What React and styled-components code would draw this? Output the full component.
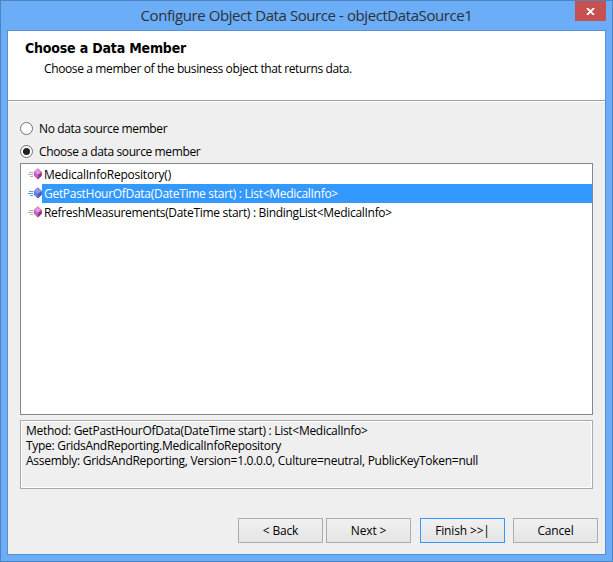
import React, { useState } from "react";
import styled, { createGlobalStyle } from "styled-components";

const members = [
  { name: "MedicalInfoRepository()", spacing: "-0.23px" },
  {
    name: "GetPastHourOfData(DateTime start) : List<MedicalInfo>",
    spacing: "-0.29px",
  },
  {
    name: "RefreshMeasurements(DateTime start) : BindingList<MedicalInfo>",
    spacing: "-0.31px",
  },
];

const MethodIcon = ({ selected }) => {
  const [light, mid, dark] = selected
    ? ["#8c9cf0", "#6b7ce0", "#4c5cba"]
    : ["#e49ade", "#c763bf", "#97388f"];
  return (
    <Icon width="14" height="12" viewBox="0 0 14 12">
      <path
        d="M1 4.5h4M0 6.5h5M2 8.5h3"
        stroke={selected ? "#5a9bd8" : "#b3b29a"}
        fill="none"
      />
      <path d="M9.8 0.3L13.8 4V7.8L9.8 11.6L5.8 7.8V4Z" fill={mid} />
      <path d="M9.8 0.9L12.8 4L9.8 6.8L6.8 4Z" fill={light} />
      <path d="M13.8 4.2V7.8L9.8 11.6V7.2Z" fill={dark} />
    </Icon>
  );
};

const App = () => {
  const [useMember, setUseMember] = useState(true);
  const [selected, setSelected] = useState(1);

  return (
    <>
      <GlobalStyle />
      <Window>
        <TitleBar>
          <Caption>Configure Object Data Source - objectDataSource1</Caption>
          <CloseButton type="button" aria-label="Close">
            <svg width="9" height="7" viewBox="0 0 9 7">
              <path d="M1 0L8 7M8 0L1 7" stroke="#fff" strokeWidth="1.8" />
            </svg>
          </CloseButton>
        </TitleBar>
        <Client>
          <Header>
            <Heading>Choose a Data Member</Heading>
            <Subheading>
              Choose a member of the business object that returns data.
            </Subheading>
          </Header>
          <Content>
            {/* member choice */}
            <Option onClick={() => setUseMember(false)}>
              <Radio checked={!useMember} />
              <Text $spacing="-0.38px">No data source member</Text>
            </Option>
            <Option onClick={() => setUseMember(true)}>
              <Radio checked={useMember} />
              <Text $spacing="-0.38px">Choose a data source member</Text>
            </Option>
            <List>
              {members.map((m, index) => (
                <Row key={m.name} onClick={() => setSelected(index)}>
                  <MethodIcon selected={index === selected} />
                  <RowLabel $selected={index === selected}>
                    <Text $spacing={m.spacing}>{m.name}</Text>
                  </RowLabel>
                </Row>
              ))}
            </List>
            {/* member details */}
            <Info>
              <Text $spacing="-0.29px">Method: {members[selected].name}</Text>
              <Text $spacing="-0.29px">
                Type: GridsAndReporting.MedicalInfoRepository
              </Text>
              <Text $spacing="-0.28px">
                Assembly: GridsAndReporting, Version=1.0.0.0, Culture=neutral,
                PublicKeyToken=null
              </Text>
            </Info>
          </Content>
          <Footer>
            <Button type="button">&lt; Back</Button>
            <Button type="button">Next &gt;</Button>
            <Button type="button" $primary $gap="6px">
              Finish &gt;&gt;|
            </Button>
            <Button type="button" $gap="5px">
              Cancel
            </Button>
          </Footer>
        </Client>
      </Window>
    </>
  );
};

const Radio = ({ checked }) => (
  <RadioCircle role="radio" aria-checked={checked}>
    {checked && <RadioDot />}
  </RadioCircle>
);

const GlobalStyle = createGlobalStyle`
  * {
    box-sizing: border-box;
  }
  body {
    margin: 0;
    font-family: "Open Sans", "Noto Sans", sans-serif;
    font-size: 12px;
    color: #000;
  }
`;

const Window = styled.div`
  width: 613px;
  height: 562px;
  display: flex;
  flex-direction: column;
  padding: 0 6px 6px;
  background: #6badf6;
  border: 1px solid #4f83bf;
`;

const TitleBar = styled.div`
  display: flex;
  align-items: flex-start;
  flex: 0 0 29px;
`;

const Caption = styled.div`
  flex: 1;
  padding-left: 31px;
  line-height: 29px;
  font-size: 15px;
  letter-spacing: -0.42px;
  text-align: center;
  white-space: nowrap;
  color: #2b3138;
`;

const CloseButton = styled.button`
  display: flex;
  align-items: center;
  justify-content: center;
  width: 31px;
  height: 20px;
  padding: 0;
  border: none;
  background: #c75050;
`;

const Client = styled.div`
  flex: 1;
  display: flex;
  flex-direction: column;
  background: #efefef;
  border: 1px solid #5990cf;
`;

const Header = styled.header`
  height: 71px;
  padding: 8px 0 0 17px;
  background: #fff;
  border-bottom: 1px solid #fff;
  box-shadow: inset 0 -1px #a0a0a0;
`;

const Heading = styled.h1`
  margin: 0;
  font-family: "DejaVu Sans Condensed", "DejaVu Sans", sans-serif;
  font-stretch: condensed;
  font-size: 14px;
  letter-spacing: -0.18px;
  line-height: 18px;
  white-space: nowrap;
`;

const Subheading = styled.p`
  margin: 4px 0 0 19px;
  line-height: 16px;
  letter-spacing: -0.38px;
  white-space: nowrap;
`;

const Content = styled.main`
  padding: 15px 12px 0;
`;

const Text = styled.span`
  display: block;
  white-space: nowrap;
  letter-spacing: ${(props) => props.$spacing || "0px"};
`;

const Option = styled.div`
  display: flex;
  align-items: center;
  gap: 6px;
  height: 23px;
`;

const RadioCircle = styled.span`
  display: flex;
  align-items: center;
  justify-content: center;
  width: 13px;
  height: 13px;
  border: 1px solid #707070;
  border-radius: 50%;
  background: #fff;
`;

const RadioDot = styled.span`
  width: 7px;
  height: 7px;
  border-radius: 50%;
  background: #212121;
`;

const List = styled.div`
  height: 252px;
  padding-top: 1px;
  background: #fff;
  border: 1px solid #828790;
`;

const Icon = styled.svg`
  flex: none;
  margin-bottom: 1px;
`;

const Row = styled.div`
  display: flex;
  align-items: center;
  height: 19px;
  padding-left: 7px;
`;

const RowLabel = styled.div`
  flex: 1;
  padding-left: 2px;
  line-height: 19px;
  background: ${(props) => (props.$selected ? "#3399ff" : "transparent")};
  color: ${(props) => (props.$selected ? "#fff" : "#000")};
`;

const Info = styled.div`
  height: 69px;
  margin-top: 5px;
  padding: 2px 5px;
  line-height: 15px;
  border: 1px solid #a7a9ad;
  box-shadow: inset 0 0 0 1px #fff;
`;

const Footer = styled.footer`
  display: flex;
  gap: 3px;
  margin-top: 29px;
  padding-left: 230px;
`;

const Button = styled.button`
  width: 85px;
  height: 25px;
  margin-left: ${(props) => props.$gap || 0};
  padding: 0;
  border: 1px solid ${(props) => (props.$primary ? "#3399ff" : "#acacac")};
  background: linear-gradient(#f0f0f0, #e5e5e5);
  font-family: inherit;
  font-size: 12px;
  letter-spacing: -0.15px;
  color: #000;
`;

export default App;
